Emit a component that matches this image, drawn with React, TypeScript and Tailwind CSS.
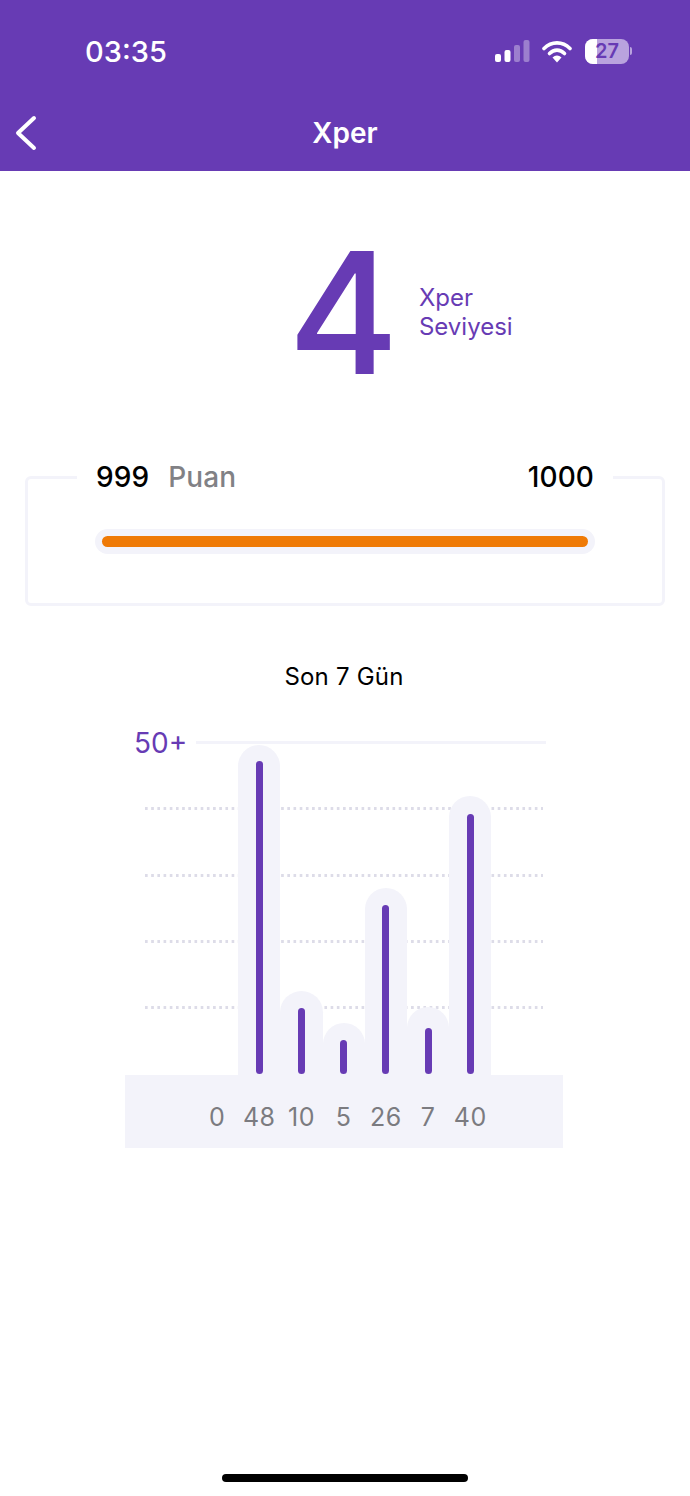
const bars = [
  { value: "0", track: 0, fill: 0 },
  { value: "48", track: 330, fill: 313 },
  { value: "10", track: 84, fill: 66 },
  { value: "5", track: 52, fill: 34 },
  { value: "26", track: 187, fill: 169 },
  { value: "7", track: 68, fill: 46 },
  { value: "40", track: 279, fill: 260 },
];

const dottedRows = [808, 875, 941, 1007];

function StatusIcons() {
  return (
    <div className="flex items-center">
      <svg width="35" height="22" viewBox="0 0 35 22" className="mr-[12px]">
        <rect x="0" y="14" width="6" height="8" rx="2" fill="#fff" />
        <rect x="9.500" y="10" width="6" height="12" rx="2" fill="#fff" />
        <rect x="19" y="5" width="6" height="17" rx="2" fill="#fff" fillOpacity="0.35" />
        <rect x="28.500" y="0" width="6" height="22" rx="2" fill="#fff" fillOpacity="0.35" />
      </svg>
      <svg width="30" height="23" viewBox="0 0 30 23" className="mr-[13px]">
        <path d="M2 8.500C9.500 1 20.500 1 28 8.500" fill="none" stroke="#fff" strokeWidth="3.600" strokeLinecap="round" />
        <path d="M7.500 13.500C12 9 18 9 22.500 13.500" fill="none" stroke="#fff" strokeWidth="3.600" strokeLinecap="round" />
        <path d="M10.500 17.500C13.200 14.800 16.800 14.800 19.500 17.500L15 22.500Z" fill="#fff" />
      </svg>
      <div className="relative flex h-[25px] w-[44px] items-center justify-center overflow-hidden rounded-[8px] bg-[#b9a3de]">
        <div className="absolute inset-y-0 left-0 w-[12px] bg-white" />
        <span className="relative text-[20px] font-semibold leading-none text-[#673bb4]">27</span>
      </div>
      <div className="ml-[1px] h-[8px] w-[2px] rounded-r-full bg-[#b9a3de]" />
    </div>
  );
}

function Chart() {
  return (
    <div className="mt-[57px] flex flex-col items-center">
      <p className="ml-[-2px] text-[24px] leading-[28px] tracking-[0.2px] text-black">Son 7 Gün</p>
      <div className="relative ml-[-2px] mt-[29px] h-[428px] w-[438px]">
        <span className="absolute left-[9px] top-[7px] text-[28px] leading-[32px] text-[#673bb4]">50+</span>
        <div className="absolute left-[71px] top-[21px] h-[3px] w-[350px] bg-[#f3f3fa]" />
        {dottedRows.map((y) => (
          <div
            key={y}
            className="absolute left-[20px] h-[3px] w-[398px] bg-[linear-gradient(90deg,#dddce8_50%,transparent_50%)] bg-[length:6.200px_3px]"
            style={{ top: y - 721 }}
          />
        ))}
        <div className="absolute inset-x-0 top-[355px] bottom-0 bg-[#f3f3fa]" />
        <div className="absolute left-[71px] top-0 flex h-[428px] w-[296px]">
          {bars.map((bar) => (
            <div key={bar.value} className="flex w-[42.200px] flex-col items-center">
              <div className="flex h-[355px] w-full flex-col justify-end">
                {bar.track > 0 && (
                  <div
                    className="flex w-full items-end justify-center rounded-t-full bg-[#f3f3fa]"
                    style={{ height: bar.track }}
                  >
                    <div className="mb-[1px] w-[7px] rounded-full bg-[#673bb4]" style={{ height: bar.fill }} />
                  </div>
                )}
              </div>
              <span className="mt-[27px] text-[25px] leading-[30px] tracking-[0.4px] text-[#7b7b80]">{bar.value}</span>
            </div>
          ))}
        </div>
      </div>
    </div>
  );
}

export default function App() {
  return (
    <main className="flex h-[1496px] w-[690px] flex-col overflow-hidden bg-white font-['Inter',sans-serif]">
      <header className="h-[171px] bg-[#673bb4] text-white">
        <div className="flex h-[103px] items-center justify-between pb-[1px] pl-[85px] pr-[58px]">
          <span className="text-[29px] font-medium leading-none">03:35</span>
          <StatusIcons />
        </div>
        <div className="relative flex h-[60px] items-center justify-center">
          <svg width="24" height="36" viewBox="0 0 24 36" className="absolute left-[14px] top-[12px]">
            <path d="M20 3L4 18L20 33" fill="none" stroke="#fff" strokeWidth="4" strokeLinecap="round" strokeLinejoin="round" />
          </svg>
          <h1 className="text-[28px] font-semibold leading-none">Xper</h1>
        </div>
      </header>

      <section className="mt-[46px] flex h-[190px] items-center pl-[288px]">
        <span className="text-[169px] font-medium leading-none text-[#673bb4]">4</span>
        <div className="ml-[20px] text-[24px] leading-[29px] text-[#673bb4]">
          <p>Xper</p>
          <p>Seviyesi</p>
        </div>
      </section>

      <section className="relative mx-[25px] mt-[69px] h-[130px] rounded-[6px] border-[3px] border-[#f3f3fa]">
        <div className="absolute inset-x-[49px] -top-[18px] flex h-[32px] items-center justify-between bg-white px-[19px] text-[28px] tracking-[0.1px]">
          <p className="font-medium text-black">
            999<span className="ml-[19px] text-[#818185]">Puan</span>
          </p>
          <p className="font-medium text-black">1000</p>
        </div>
        <div className="mx-[67px] mt-[50px] rounded-full bg-[#f3f3fa] p-[7px]">
          <div className="h-[11px] rounded-full bg-[#ef7a06]" />
        </div>
      </section>

      <Chart />

      <div className="mx-auto mt-auto mb-[14px] h-[8px] w-[246px] rounded-full bg-black" />
    </main>
  );
}
